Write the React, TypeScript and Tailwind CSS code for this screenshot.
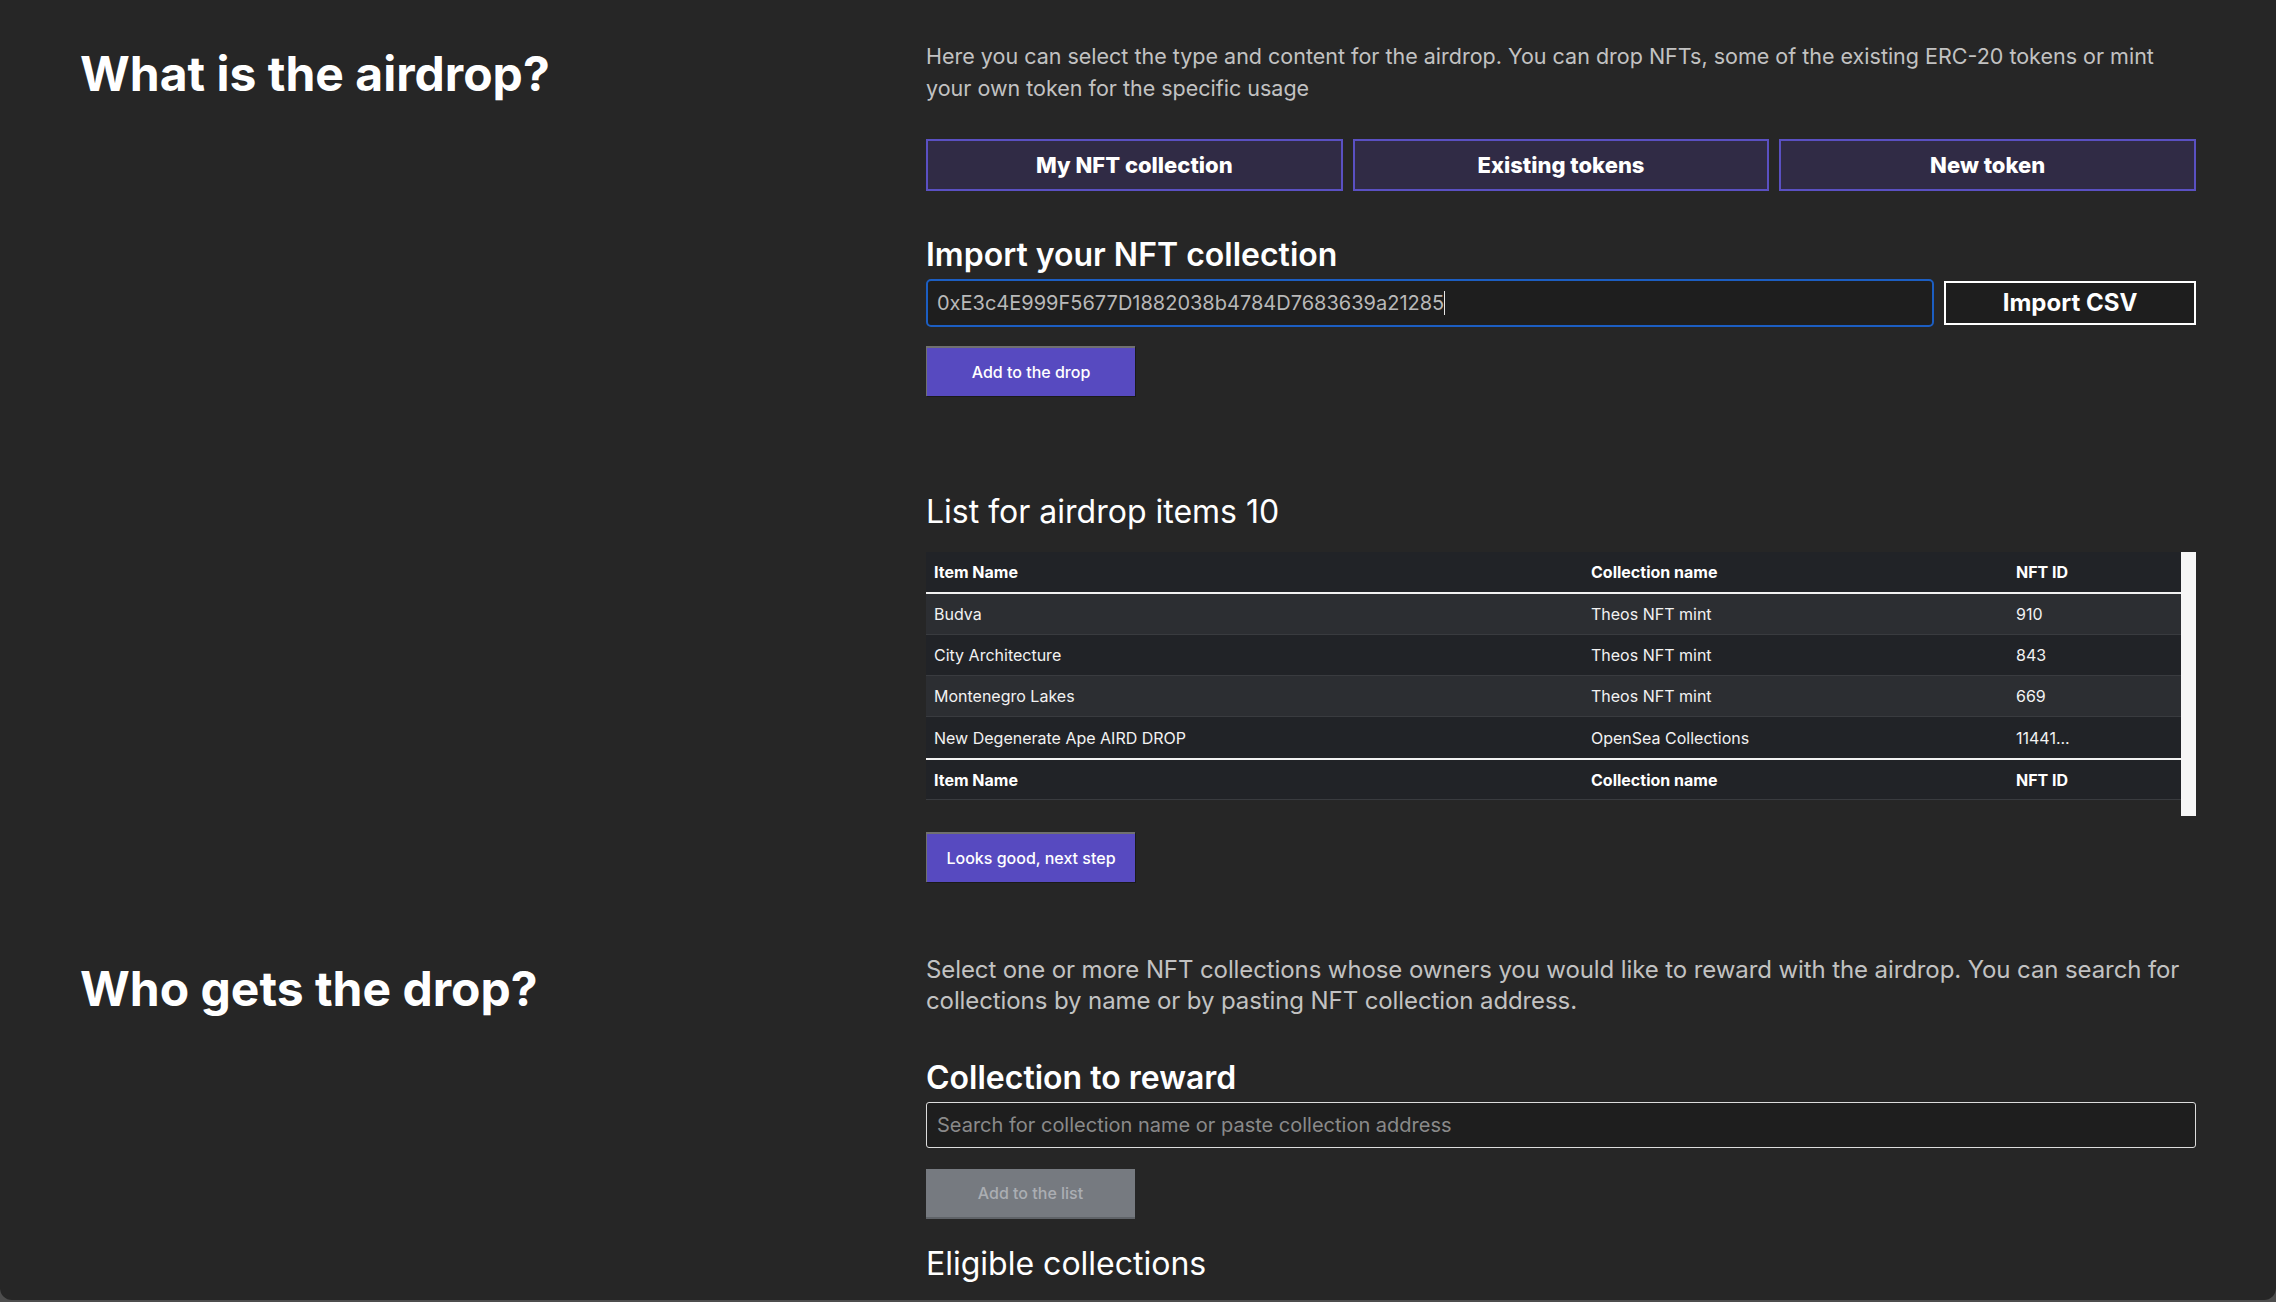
import React from "react";

const rows = [
  { name: "Budva", coll: "Theos NFT mint", id: "910" },
  { name: "City Architecture", coll: "Theos NFT mint", id: "843" },
  { name: "Montenegro Lakes", coll: "Theos NFT mint", id: "669" },
  { name: "New Degenerate Ape AIRD DROP", coll: "OpenSea Collections", id: "11441..." },
];

function HeaderRow({ border }: { border?: boolean }) {
  return (
    <div
      className={
        "grid grid-cols-[657px_425px_1fr] h-[40px] items-center bg-[#212327] font-bold text-[16px] text-white " +
        (border ? "border-b border-[#393b3f]" : "")
      }
    >
      <div className="pl-[8px]">Item Name</div>
      <div className="pl-[8px]">Collection name</div>
      <div className="pl-[8px]">NFT ID</div>
    </div>
  );
}

export default function App() {
  return (
    <div className="w-full h-[1302px] bg-[#4d4d4d] overflow-hidden" style={{ fontFamily: "Inter, 'Noto Sans', sans-serif" }}>
      <div className="h-[1300px] bg-[#262626] rounded-b-[12px] px-20 text-white">
        {/* Section 1 */}
        <div className="grid grid-cols-[846px_1fr] pt-[40px]">
          <h1 className="mt-[6px] text-[48px] leading-[56px] font-bold">What is the airdrop?</h1>
          <div className="flex flex-col">
            <p className="text-[21.5px] leading-[32px] text-[#c2c2c2]">
              Here you can select the type and content for the airdrop. You can drop NFTs, some of the existing ERC-20 tokens or mint your own token for the specific usage
            </p>
            <div className="mt-[35px] grid grid-cols-3 gap-[10px]">
              {["My NFT collection", "Existing tokens", "New token"].map((t) => (
                <button
                  key={t}
                  className="h-[52px] bg-[#302b45] border-2 border-[#5a50c2] text-[22px] font-extrabold text-white"
                >
                  {t}
                </button>
              ))}
            </div>
            <h2 className="mt-[44px] text-[32px] leading-[40px] font-semibold">Import your NFT collection</h2>
            <div className="mt-[4px] flex items-center gap-[10px]">
              <div className="flex-1 h-[48px] bg-[#1e1e1e] border-2 border-[#1c5ec2] rounded-[5px] flex items-center px-[9px] text-[20px] text-[#b9b9b9]">
                <span>0xE3c4E999F5677D1882038b4784D7683639a21285</span>
                <span className="w-[1px] h-[24px] bg-[#e6e6e6]" />
              </div>
              <button className="w-[252px] h-[44px] border-2 border-white bg-[#1e1e1e] text-[24px] font-bold text-white">
                Import CSV
              </button>
            </div>
            <button className="mt-[19px] w-[209px] h-[50px] bg-[#574ac0] border-t-2 border-l border-[#707070] text-[16px] font-medium text-white shadow-[1px_1px_0_#1a1a1a]">
              Add to the drop
            </button>
            <h2 className="mt-[96px] text-[32px] leading-[40px] font-normal">List for airdrop items 10</h2>
            <div className="mt-[20px] h-[264px] flex">
              <div className="flex-1 flex flex-col text-[16px] text-[#f2f2f2]">
                <HeaderRow />
                <div className="h-[2px] bg-[#f2f2f2]" />
                {rows.map((r, i) => (
                  <div
                    key={r.name}
                    className={
                      "grid grid-cols-[657px_425px_1fr] h-[41px] items-center " +
                      (i % 2 === 0 ? "bg-[#2c2e32] " : "bg-[#212327] ") +
                      (i < 3 ? "border-b border-[#393b3f]" : "")
                    }
                  >
                    <div className="pl-[8px]">{r.name}</div>
                    <div className="pl-[8px]">{r.coll}</div>
                    <div className="pl-[8px]">{r.id}</div>
                  </div>
                ))}
                <div className="h-[2px] bg-[#f2f2f2]" />
                <HeaderRow border />
              </div>
              <div className="w-[15px] bg-[#f6f6f6]" />
            </div>
            <button className="mt-[16px] w-[209px] h-[50px] bg-[#574ac0] border-t-2 border-l border-[#707070] text-[16px] font-medium text-white shadow-[1px_1px_0_#1a1a1a]">
              Looks good, next step
            </button>
          </div>
        </div>

        {/* Section 2 */}
        <div className="grid grid-cols-[846px_1fr] mt-[72px]">
          <h1 className="mt-[7px] text-[48px] leading-[56px] font-bold">Who gets the drop?</h1>
          <div className="flex flex-col">
            <p className="text-[24px] leading-[31px] tracking-[-0.1px] text-[#c2c2c2]">
              Select one or more NFT collections whose owners you would like to reward with the airdrop. You can search for collections by name or by pasting NFT collection address.
            </p>
            <h2 className="mt-[42px] text-[32px] leading-[40px] font-semibold">Collection to reward</h2>
            <div className="mt-[4px] h-[46px] bg-[#1e1e1e] border border-[#dcdcdc] rounded-[3px] flex items-center px-[10px] text-[20px] text-[#8a8a8a]">
              Search for collection name or paste collection address
            </div>
            <button className="mt-[21px] w-[209px] h-[50px] bg-[#767a80] border-b-2 border-[#5f6368] text-[16px] font-medium text-[#abaeb3]">
              Add to the list
            </button>
            <h2 className="mt-[25px] text-[32px] leading-[40px] font-normal">Eligible collections</h2>
          </div>
        </div>
      </div>
    </div>
  );
}
